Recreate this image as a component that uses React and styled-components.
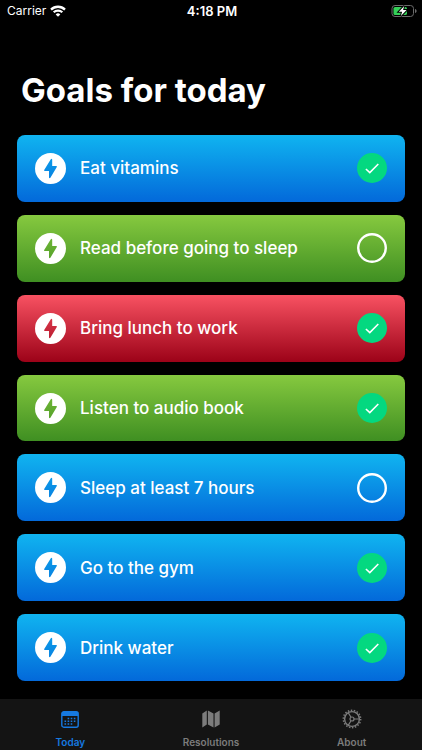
import React, { useState } from 'react'
import styled, { createGlobalStyle } from 'styled-components'

const GlobalStyle = createGlobalStyle`
    *{
        box-sizing:border-box;
    }
    body{
        margin:0;
        background-color:#000;
        color:#fff;
        font-family:Inter, "Liberation Sans", sans-serif;
    }
`;

const colors = {
    blue: ['#10b4f0', '#0369da'],
    green: ['#86c93f', '#3f8f22'],
    red: ['#f85262', '#9c0218'],
}

const initialGoals = [
    { id: 1, name: 'Eat vitamins', color: 'blue', done: true },
    { id: 2, name: 'Read before going to sleep', color: 'green', done: false },
    { id: 3, name: 'Bring lunch to work', color: 'red', done: true },
    { id: 4, name: 'Listen to audio book', color: 'green', done: true },
    { id: 5, name: 'Sleep at least 7 hours', color: 'blue', done: false },
    { id: 6, name: 'Go to the gym', color: 'blue', done: true },
    { id: 7, name: 'Drink water', color: 'blue', done: true },
]

const WifiIcon = () => (
    <svg width="16" height="12" viewBox="0 0 16 12" fill="none" stroke="#fff" strokeWidth="2.3">
        <path d="M1 4.6a10 10 0 0 1 14 0" />
        <path d="M3.7 7.3a6.1 6.1 0 0 1 8.6 0" />
        <path d="M8 11.8 5.7 9.4a3.3 3.3 0 0 1 4.6 0z" fill="#fff" stroke="none" />
    </svg>
)

const BatteryIcon = () => (
    <svg width="26" height="14" viewBox="0 0 26 14">
        <rect x="1" y="1.5" width="21.5" height="11" rx="3" fill="none" stroke="#6b6b6b" />
        <path d="M24 5v4c1-.3 1.6-1.1 1.6-2s-.6-1.7-1.6-2z" fill="#6b6b6b" />
        <rect x="2.5" y="3" width="13.5" height="8" rx="1.6" fill="#34d058" />
        <path d="M13.2 2 7.8 7.7h3.3L9.9 12l5.7-5.900h-3.500z" fill="#fff" stroke="#000" strokeWidth="2" paintOrder="stroke" />
    </svg>
)

const BoltIcon = () => (
    <svg width="31" height="31" viewBox="0 0 31 31">
        <path
            fill="#fff"
            fillRule="evenodd"
            d="M15.5 0a15.5 15.5 0 1 0 0 31a15.5 15.5 0 1 0 0-31z M15.8 6.200 9.200 16.900q-.4 1 .6 1h4.200v6.500q.3 1.400 1.400.3l6.400-10.800q.4-1-.6-1h-4v-6.400q-.4-1.400-1.400-.3z"
        />
    </svg>
)

const CalendarIcon = () => (
    <svg width="18" height="17" viewBox="0 0 18 17">
        <rect x=".8" y=".8" width="16.4" height="15.4" rx="2" fill="none" stroke="currentColor" strokeWidth="1.4" />
        <path d="M1 1h16v4H1z" fill="currentColor" />
        <path
            d="M6.6 7.500h8.500M3.500 10.300h11.600M3.500 13.100h8"
            stroke="currentColor"
            strokeWidth="1.500"
            strokeDasharray="1.600 1.500"
        />
    </svg>
)

const MapIcon = () => (
    <svg width="20" height="18" viewBox="0 0 20 18" fill="currentColor">
        <path d="M5.8.6v13.800L1.300 17.400V3.500zM6.900.6l5.600 3v13.800l-5.600-3zM13.600 3.600 18.700.6v13.800l-5.100 3z" />
    </svg>
)

const GearIcon = () => (
    <svg width="20" height="20" viewBox="0 0 20 20" fill="none" stroke="currentColor">
        <circle cx="10" cy="10" r="7.4" strokeWidth="1.4" />
        <circle cx="10" cy="10" r="8.7" strokeWidth="1.5" strokeDasharray="1.5 1.537" />
        <circle cx="10" cy="10" r="2" strokeWidth="1.2" />
        <path d="M12 10h5.200M9 8.300 6.200 3.600M9 11.700l-2.800 4.700" strokeWidth="1.2" />
    </svg>
)

function App() {

    const [goals, setGoals] = useState(initialGoals);
    const [tab, setTab] = useState('Today');

    const toggle = (id) => {
        setGoals(goals.map((g) => (g.id === id ? { ...g, done: !g.done } : g)))
    }

    const tabs = [
        { name: 'Today', icon: <CalendarIcon /> },
        { name: 'Resolutions', icon: <MapIcon /> },
        { name: 'About', icon: <GearIcon /> },
    ]

    return (
        <Container>
            <GlobalStyle />
            <StatusBar>
                <Carrier>Carrier <WifiIcon /></Carrier>
                <Time>4:18 PM</Time>
                <Battery><BatteryIcon /></Battery>
            </StatusBar>
            <Main>
                <Title>Goals for today</Title>
                <GoalList>
                    {goals.map((goal) => (
                        <Goal key={goal.id} $color={goal.color}>
                            <BoltIcon />
                            <GoalName>{goal.name}</GoalName>
                            <Check type="checkbox" checked={goal.done} onChange={() => toggle(goal.id)} />
                            <CheckMark viewBox="0 0 30 30">
                                <circle cx="15" cy="15" r="13.8" />
                                <path d="M8.9 16 12.8 19.600 21.300 11" />
                            </CheckMark>
                        </Goal>
                    ))}
                </GoalList>
            </Main>
            <TabBar>
                {tabs.map((t) => (
                    <Tab key={t.name} href={`#${t.name.toLowerCase()}`} $active={tab === t.name} onClick={() => setTab(t.name)}>
                        <TabIcon>{t.icon}</TabIcon>
                        {t.name}
                    </Tab>
                ))}
            </TabBar>
        </Container>
    )
}


const Container = styled.div`
    min-height:100vh;
    display:flex;
    flex-direction:column;
    background-color:#000;
`;
const StatusBar = styled.header`
    display:grid;
    grid-template-columns:1fr auto 1fr;
    align-items:center;
    height:22px;
    padding:0 5px 0 7px;
    line-height:16px;
`;
const Carrier = styled.div`
    display:flex;
    align-items:center;
    gap:4px;
    font-size:12px;
`;
const Time = styled.div`
    font-size:13px;
    font-weight:600;
`;
const Battery = styled.div`
    display:flex;
    justify-content:flex-end;
`;
const Main = styled.main`
    flex:1;
    display:flex;
    flex-direction:column;
    padding:48px 17px 18px;
`;
const Title = styled.h1`
    margin:0 0 25px;
    padding-left:4px;
    font-size:33px;
    font-weight:700;
    line-height:40px;
`;
const GoalList = styled.div`
    flex:1;
    display:flex;
    flex-direction:column;
    gap:13px;
`;
const Goal = styled.label`
    flex:1;
    min-height:60px;
    display:flex;
    align-items:center;
    padding:0 18px;
    border-radius:8px;
    background:linear-gradient(${({ $color }) => colors[$color].join(', ')});
    cursor:pointer;
`;
const GoalName = styled.span`
    flex:1;
    padding-left:14px;
    font-size:17px;
    font-weight:500;
    line-height:24px;
`;
const CheckMark = styled.svg`
    width:30px;
    height:30px;
    fill:none;
    stroke:#fff;
    stroke-width:2.4;
        path{
            display:none;
            stroke-width:1.6;
        }
`;
const Check = styled.input`
    appearance:none;
    width:0;
    height:0;
    margin:0;
        &:checked + ${CheckMark} circle{
            fill:#04d880;
            stroke:#04d880;
        }
        &:checked + ${CheckMark} path{
            display:block;
        }
        &:focus-visible + ${CheckMark}{
            outline:2px solid #fff;
            border-radius:50%;
        }
`;
const TabBar = styled.nav`
    display:flex;
    height:51px;
    background-color:#141414;
`;
const Tab = styled.a`
    flex:1;
    display:flex;
    flex-direction:column;
    align-items:center;
    padding-top:10px;
    gap:6px;
    font-size:10px;
    font-weight:600;
    line-height:14px;
    text-decoration:none;
    color:${({ $active }) => ($active ? '#1679e0' : '#7c7c7c')};
`;
const TabIcon = styled.span`
    height:20px;
    display:flex;
    align-items:center;
`;
export default App
